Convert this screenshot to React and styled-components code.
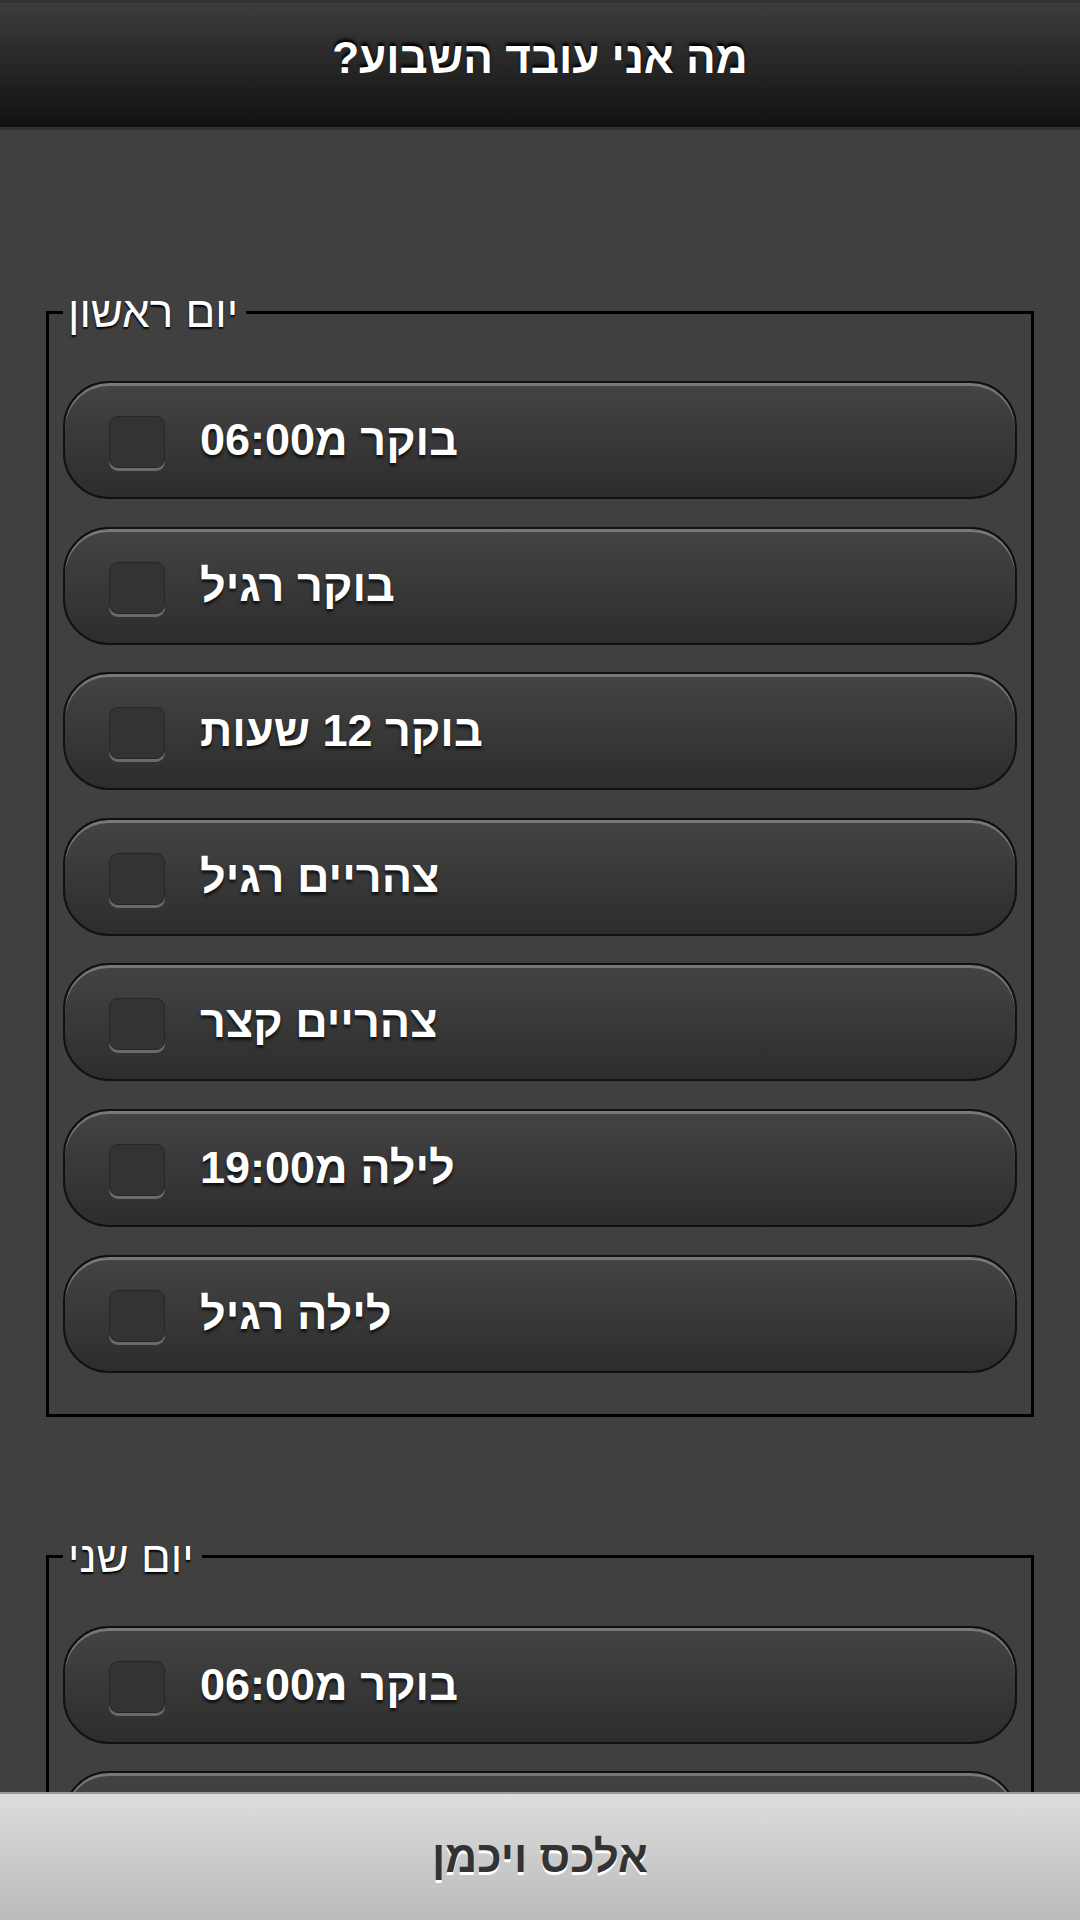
import React from 'react';
import styled, { createGlobalStyle } from 'styled-components';

const GlobalStyle = createGlobalStyle`
  html, body {
    margin: 0;
    padding: 0;
    height: 100%;
  }
  body {
    background: #404040;
    font-family: "Liberation Sans", Arial, sans-serif;
  }
  #root {
    height: 100%;
  }
`;

const Page = styled.div`
  display: flex;
  flex-direction: column;
  height: 100vh;
  overflow: hidden;
`;

const Header = styled.header`
  flex: none;
  height: 124px;
  border-top: 3px solid #333;
  border-bottom: 3px solid #333;
  background: linear-gradient(#3c3c3c, #111);
  display: flex;
  align-items: center;
  justify-content: center;
`;

const Title = styled.h1`
  margin: 0 0 14px;
  color: #fff;
  font-size: 44px;
  font-weight: bold;
  text-shadow: 0 -3px 3px #000;
`;

const Content = styled.main`
  flex: 1;
  overflow: hidden;
  padding-top: 42px;
`;

const Day = styled.fieldset`
  margin: 113px 46px 0;
  padding: 0 14px 41px;
  border: 3px solid #000;
  min-width: 0;
`;

const Legend = styled.legend`
  padding: 0 8px 0 5px;
  color: #fff;
  font-size: 44px;
  line-height: 54px;
  text-shadow: 0 2px 2px #000;
`;

const Options = styled.div`
  display: flex;
  flex-direction: column;
  gap: 27.6px;
  padding-top: 42px;
`;

const Option = styled.label`
  display: flex;
  align-items: center;
  height: 118px;
  box-sizing: border-box;
  border: 2px solid #111;
  border-radius: 46px;
  background: linear-gradient(#444, #2d2d2d);
  box-shadow: inset 0 3px 0 rgba(255, 255, 255, 0.28);
  padding-left: 44px;
  color: #fff;
  font-size: 45px;
  font-weight: bold;
  text-shadow: 0 3px 3px #111;
  cursor: pointer;
`;

const Box = styled.span`
  flex: none;
  width: 56px;
  height: 52px;
  box-sizing: border-box;
  border-radius: 9px;
  background: #333;
  border: 1px solid #262626;
  box-shadow: 0 3px 0 #6a6a6a;
  margin: 4px 35px 0 0;
`;

const Footer = styled.footer`
  flex: none;
  height: 126px;
  border-top: 2px solid #999;
  background: linear-gradient(#ddd, #bbb);
  display: flex;
  align-items: center;
  justify-content: center;
`;

const Signature = styled.h2`
  margin: 0;
  color: #333;
  font-size: 44px;
  font-weight: bold;
  text-shadow: 0 3px 0 #fff;
`;

const days = ['יום ראשון', 'יום שני', 'יום שלישי', 'יום רביעי', 'יום חמישי', 'יום שישי', 'שבת'];

const shifts = [
  'בוקר מ06:00',
  'בוקר רגיל',
  'בוקר 12 שעות',
  'צהריים רגיל',
  'צהריים קצר',
  'לילה מ19:00',
  'לילה רגיל',
];

export default function App() {
  return (
    <Page>
      <GlobalStyle />
      <Header>
        <Title dir="rtl">מה אני עובד השבוע?</Title>
      </Header>
      <Content>
        {days.map((day) => (
          <Day key={day}>
            <Legend>{day}</Legend>
            <Options>
              {shifts.map((shift) => (
                <Option key={shift}>
                  <Box />
                  {shift}
                </Option>
              ))}
            </Options>
          </Day>
        ))}
      </Content>
      <Footer>
        <Signature dir="rtl">אלכס ויכמן</Signature>
      </Footer>
    </Page>
  );
}
